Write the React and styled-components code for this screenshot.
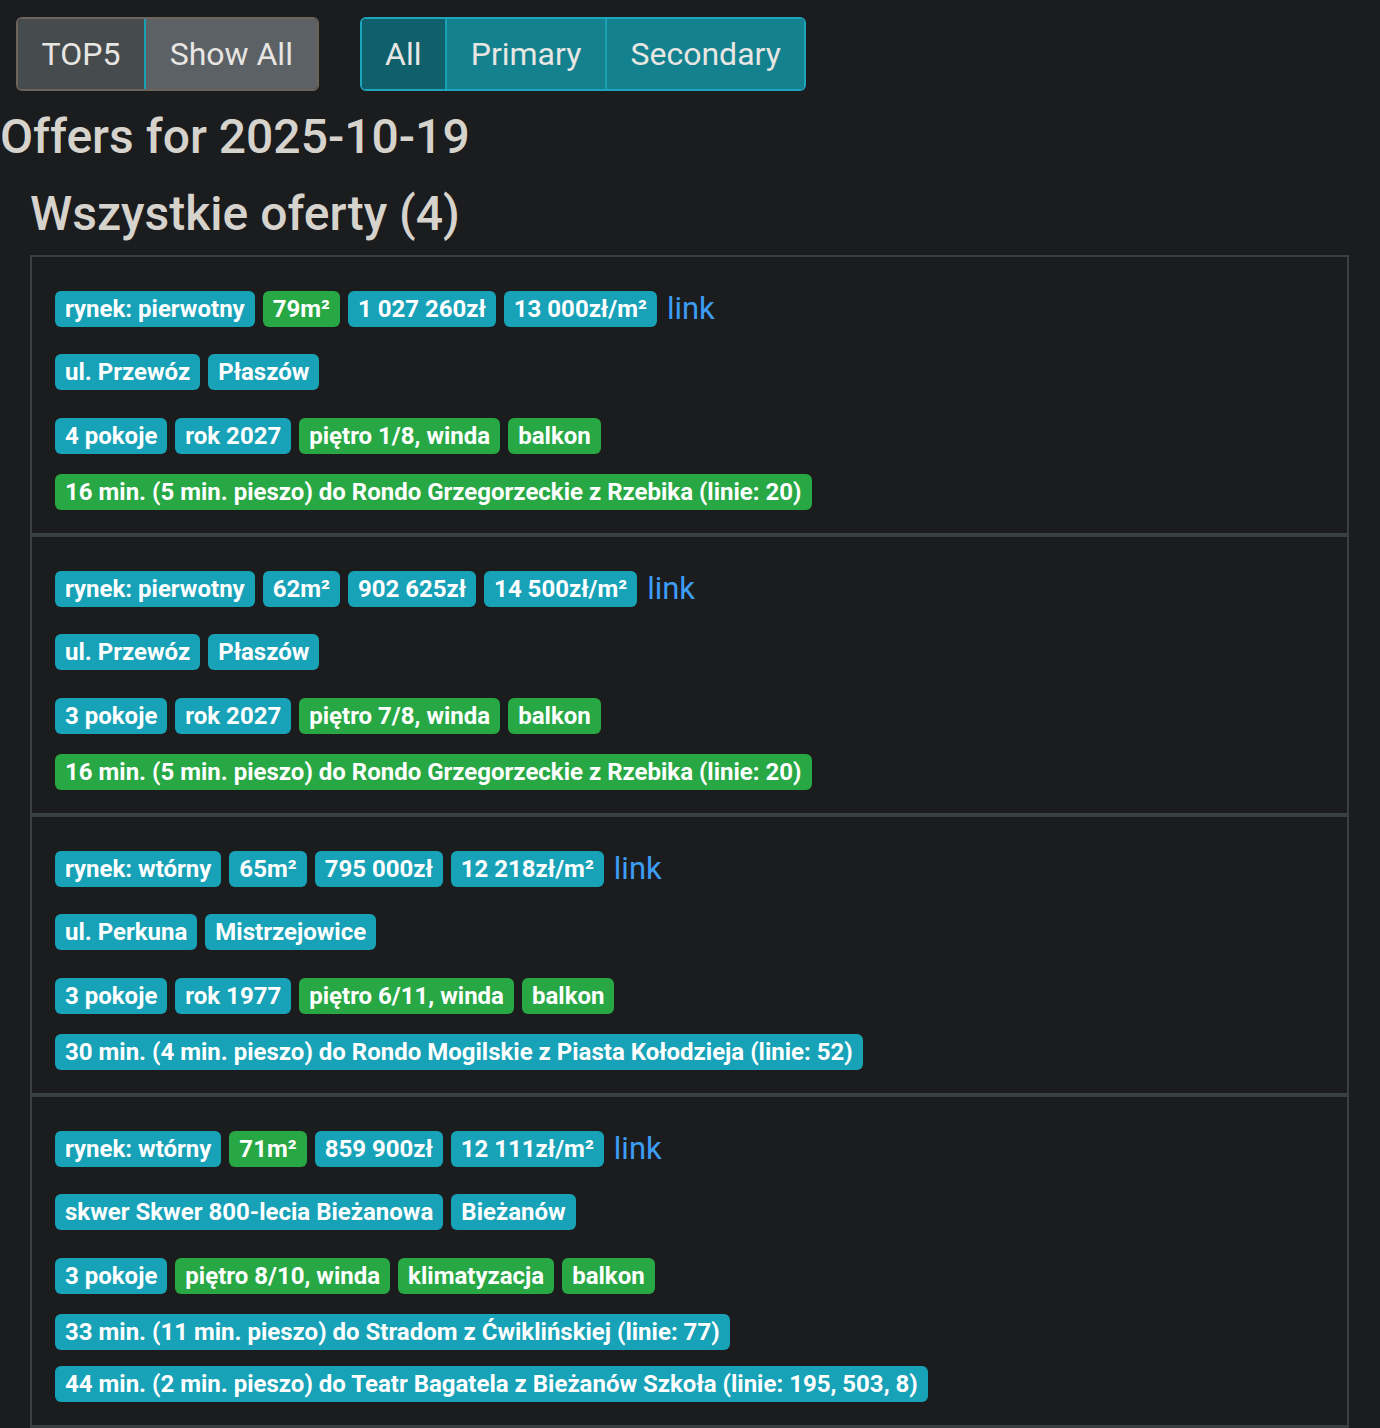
import React from "react";
import styled, {createGlobalStyle} from "styled-components";

const GlobalStyle = createGlobalStyle`
  html, body {
    margin: 0;
    padding: 0;
    background: #1b1c1e;
  }
  body {
    font-family: Roboto, "Noto Sans", "Liberation Sans", sans-serif;
    color: #d6d3cd;
  }
`;

const Page = styled.div`
  min-height: 1428px;
  background: #1b1c1e;
  padding-top: 17px;
  box-sizing: border-box;
`;

const Toolbar = styled.div`
  display: flex;
  gap: 41px;
  margin-left: 16px;
`;

const ButtonGroup = styled.div`
  display: flex;
  height: 74px;
  box-sizing: border-box;
  border: 2px solid ${({variant}) => (variant === "info" ? "#1ba6bd" : "#6c645a")};
  border-radius: 6px;
  overflow: hidden;
`;

const GroupButton = styled.button`
  border: 0;
  margin: 0;
  padding: 0 23.6px;
  font-family: Roboto, "Liberation Sans", sans-serif;
  font-size: 32px;
  color: #e8e6e3;
  cursor: pointer;
  background: ${({variant, active}) =>
    variant === "info" ? (active ? "#0f606b" : "#14818f") : active ? "#464b4e" : "#5b6165"};
  & + & {
    border-left: 2px solid ${({variant}) => (variant === "info" ? "#1a9fb3" : "#6c645a")};
  }
`;

const Title = styled.h1`
  margin: 17px 0 0;
  font-size: 48px;
  font-weight: 500;
  line-height: 1.2;
  color: #d6d3cd;
`;

const Subtitle = styled.h2`
  margin: 19px 0 0 30px;
  font-size: 48px;
  font-weight: 500;
  line-height: 1.2;
  color: #d6d3cd;
`;

const OfferList = styled.div`
  margin: 13px 31px 0 30px;
  border: 2px solid #3a3f42;
  border-bottom-width: 3px;
`;

const OfferCard = styled.div`
  padding: 33px 24px 23px 23px;
  & + & {
    border-top: 4px solid #3a3f42;
  }
`;

const FactRow = styled.div`
  display: flex;
  align-items: center;
  flex-wrap: wrap;
  gap: 8px;
  height: 36px;
  margin-bottom: ${({tight}) => (tight ? "20px" : "28px")};
`;

const CommuteList = styled.div`
  display: flex;
  flex-direction: column;
  align-items: flex-start;
  gap: 16px;
`;

const Badge = styled.span`
  display: inline-flex;
  align-items: center;
  height: 36px;
  padding: 0 10px;
  border-radius: 6px;
  font-size: 24px;
  font-weight: 700;
  color: #fff;
  white-space: nowrap;
  background: ${({tone}) => (tone === "success" ? "#28a745" : "#17a2b8")};
`;

const OfferLink = styled.a`
  margin-left: 2px;
  font-size: 31px;
  color: #3d9df5;
  text-decoration: none;
`;

const offers = [
  {
    market: "rynek: pierwotny",
    area: ["79m²", "success"],
    price: "1 027 260zł",
    perMeter: "13 000zł/m²",
    address: ["ul. Przewóz", "Płaszów"],
    features: [
      ["4 pokoje", "info"],
      ["rok 2027", "info"],
      ["piętro 1/8, winda", "success"],
      ["balkon", "success"],
    ],
    commutes: [["16 min. (5 min. pieszo) do Rondo Grzegorzeckie z Rzebika (linie: 20)", "success"]],
  },
  {
    market: "rynek: pierwotny",
    area: ["62m²", "info"],
    price: "902 625zł",
    perMeter: "14 500zł/m²",
    address: ["ul. Przewóz", "Płaszów"],
    features: [
      ["3 pokoje", "info"],
      ["rok 2027", "info"],
      ["piętro 7/8, winda", "success"],
      ["balkon", "success"],
    ],
    commutes: [["16 min. (5 min. pieszo) do Rondo Grzegorzeckie z Rzebika (linie: 20)", "success"]],
  },
  {
    market: "rynek: wtórny",
    area: ["65m²", "info"],
    price: "795 000zł",
    perMeter: "12 218zł/m²",
    address: ["ul. Perkuna", "Mistrzejowice"],
    features: [
      ["3 pokoje", "info"],
      ["rok 1977", "info"],
      ["piętro 6/11, winda", "success"],
      ["balkon", "success"],
    ],
    commutes: [["30 min. (4 min. pieszo) do Rondo Mogilskie z Piasta Kołodzieja (linie: 52)", "info"]],
  },
  {
    market: "rynek: wtórny",
    area: ["71m²", "success"],
    price: "859 900zł",
    perMeter: "12 111zł/m²",
    address: ["skwer Skwer 800-lecia Bieżanowa", "Bieżanów"],
    features: [
      ["3 pokoje", "info"],
      ["piętro 8/10, winda", "success"],
      ["klimatyzacja", "success"],
      ["balkon", "success"],
    ],
    commutes: [
      ["33 min. (11 min. pieszo) do Stradom z Ćwiklińskiej (linie: 77)", "info"],
      ["44 min. (2 min. pieszo) do Teatr Bagatela z Bieżanów Szkoła (linie: 195, 503, 8)", "info"],
    ],
  },
];

const Offer = ({offer}) => (
  <OfferCard>
    <FactRow>
      <Badge>{offer.market}</Badge>
      <Badge tone={offer.area[1]}>{offer.area[0]}</Badge>
      <Badge>{offer.price}</Badge>
      <Badge>{offer.perMeter}</Badge>
      <OfferLink href="#">link</OfferLink>
    </FactRow>
    <FactRow>
      {offer.address.map((part) => (
        <Badge key={part}>{part}</Badge>
      ))}
    </FactRow>
    <FactRow tight>
      {offer.features.map(([label, tone]) => (
        <Badge key={label} tone={tone}>
          {label}
        </Badge>
      ))}
    </FactRow>
    <CommuteList>
      {offer.commutes.map(([label, tone]) => (
        <Badge key={label} tone={tone}>
          {label}
        </Badge>
      ))}
    </CommuteList>
  </OfferCard>
);

export default function App() {
  return (
    <Page>
      <GlobalStyle />
      <Toolbar>
        <ButtonGroup>
          <GroupButton active>TOP5</GroupButton>
          <GroupButton>Show All</GroupButton>
        </ButtonGroup>
        <ButtonGroup variant="info">
          <GroupButton variant="info" active>
            All
          </GroupButton>
          <GroupButton variant="info">Primary</GroupButton>
          <GroupButton variant="info">Secondary</GroupButton>
        </ButtonGroup>
      </Toolbar>
      <Title>Offers for 2025-10-19</Title>
      <Subtitle>Wszystkie oferty (4)</Subtitle>
      <OfferList>
        {offers.map((offer, i) => (
          <Offer key={i} offer={offer} />
        ))}
      </OfferList>
    </Page>
  );
}
